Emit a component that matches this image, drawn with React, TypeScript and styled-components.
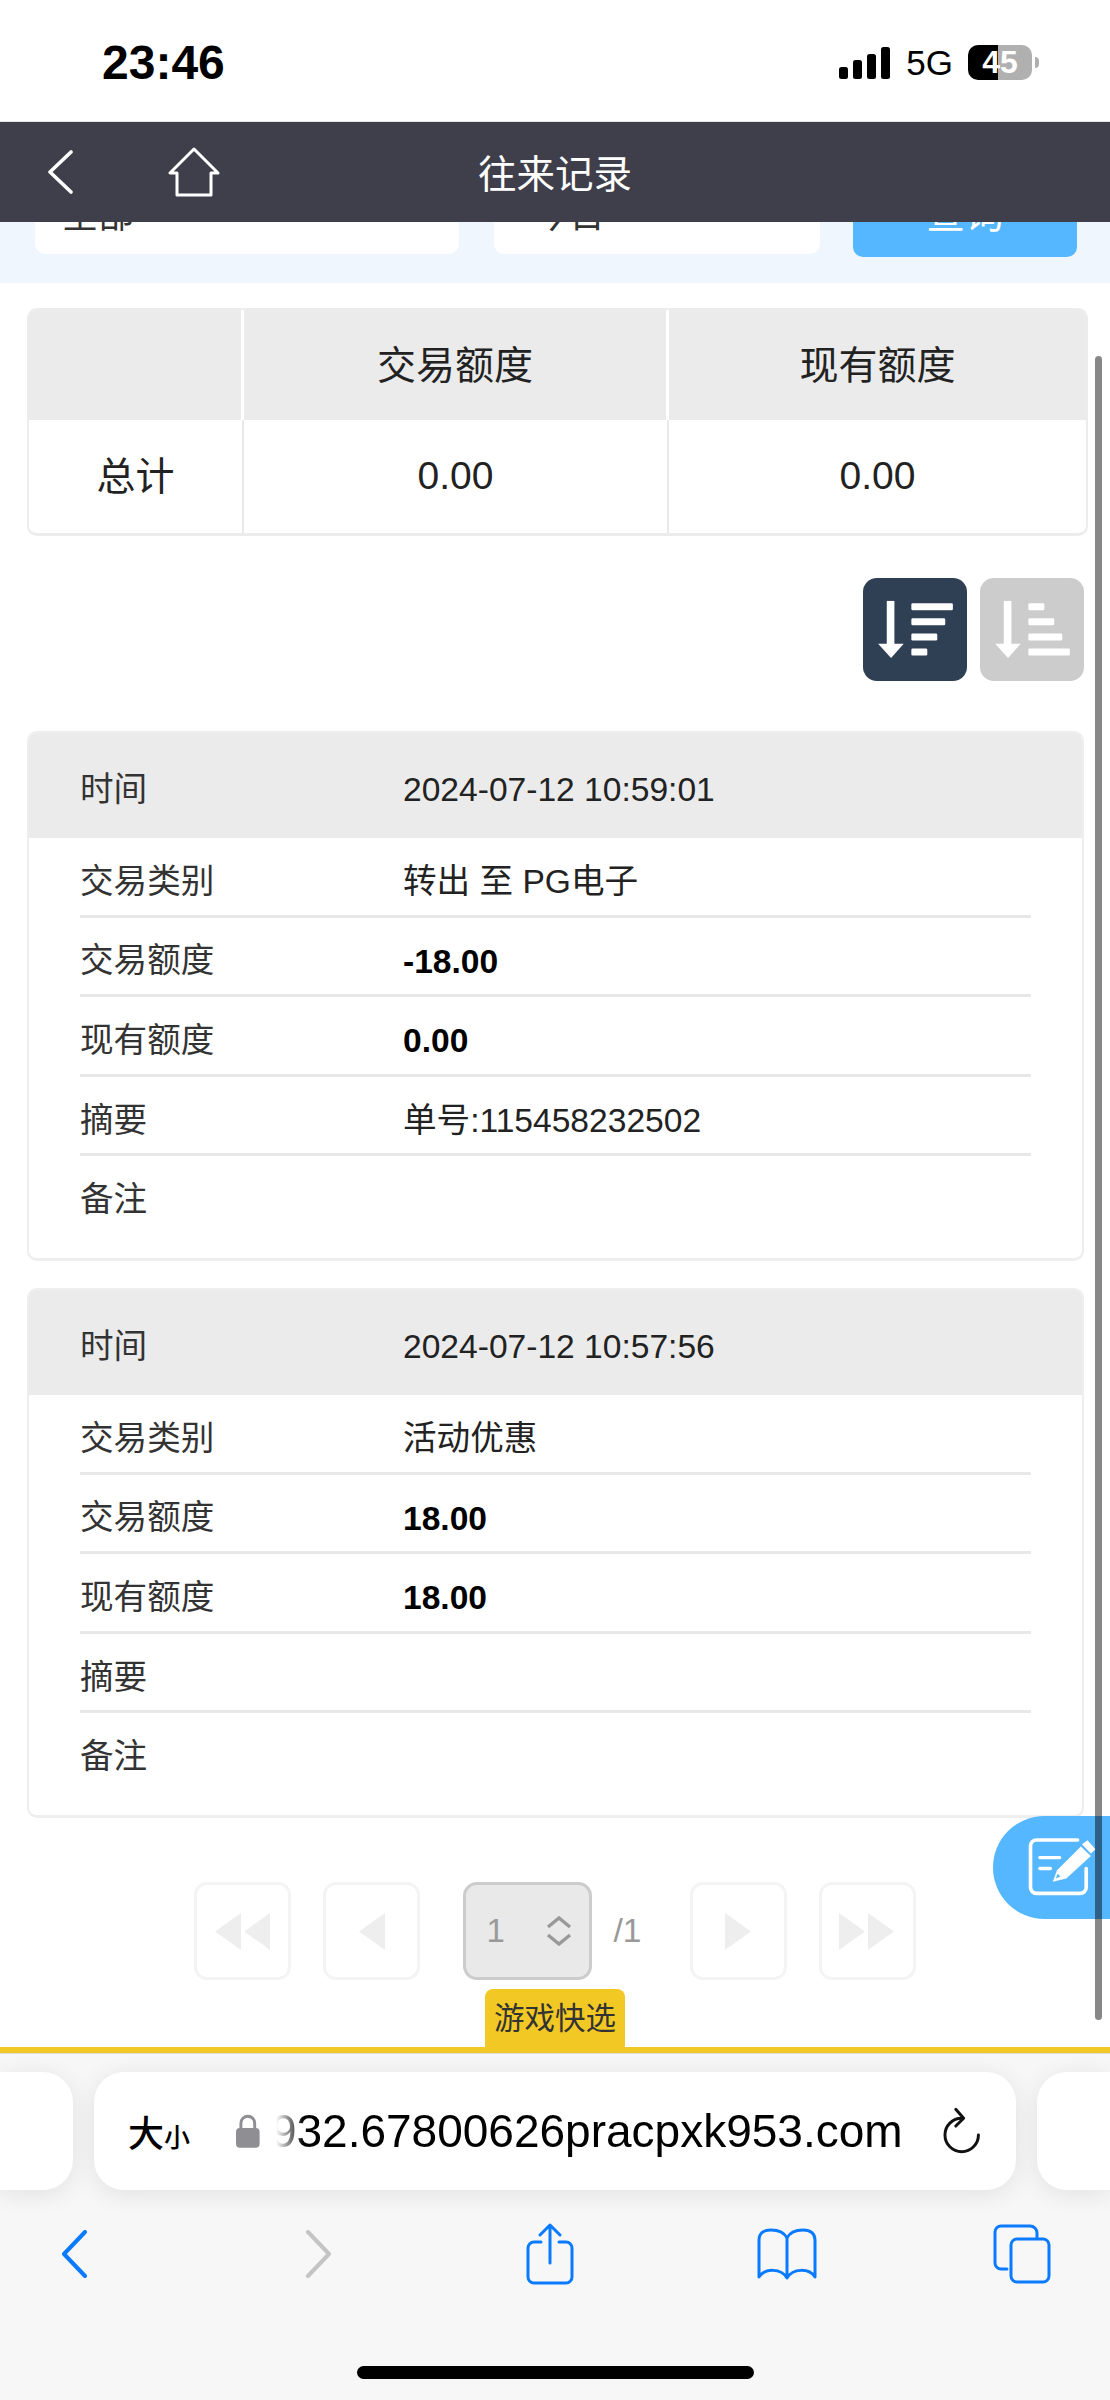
import React from "react";
import styled, { createGlobalStyle } from "styled-components";

const GlobalStyle = createGlobalStyle`
  html, body {
    margin: 0;
    padding: 0;
    background: #fff;
    font-family: "Liberation Sans", "Noto Sans CJK SC", sans-serif;
  }
`;

const Page = styled.div`
  position: relative;
  display: flex;
  flex-direction: column;
  width: 1110px;
  height: 2400px;
  overflow: hidden;
  background: #fff;
  color: #222;
`;

/* ---------- phone status bar ---------- */
const StatusBar = styled.div`
  box-sizing: border-box;
  display: flex;
  justify-content: space-between;
  align-items: center;
  height: 122px;
  padding: 4px 71px 0 102px;
  border-bottom: 1px solid #e6e6e6;
`;

const Clock = styled.span`
  font-size: 48px;
  font-weight: 700;
  color: #000;
`;

const StatusIcons = styled.div`
  display: flex;
  align-items: center;
`;

const Network = styled.span`
  margin: 0 15px 0 16px;
  font-size: 35px;
  color: #000;
`;

const Battery = styled.span`
  display: flex;
  justify-content: center;
  align-items: center;
  width: 64px;
  height: 35px;
  border-radius: 10px;
  background: linear-gradient(to right, #000 0 30px, #b0b0b0 30px);
  color: #fff;
  font-size: 32px;
  font-weight: 700;
`;

const BatteryCap = styled.span`
  width: 4px;
  height: 11px;
  margin-left: 3px;
  border-radius: 0 4px 4px 0;
  background: #b0b0b0;
`;

/* ---------- app header ---------- */
const NavBar = styled.header`
  display: grid;
  grid-template-columns: 1fr auto 1fr;
  align-items: center;
  height: 100px;
  flex: none;
  background: #3f3f4b;
`;

const NavIcons = styled.div`
  display: flex;
  align-items: center;
  gap: 95px;
  padding-left: 47px;
`;

const NavTitle = styled.h1`
  margin: 0 0 3px;
  font-size: 38.5px;
  font-weight: 400;
  color: #fff;
`;

/* ---------- filter bar, scrolled under the header ---------- */
const FilterBar = styled.div`
  box-sizing: border-box;
  display: flex;
  align-items: flex-end;
  height: 61px;
  flex: none;
  overflow: hidden;
  padding: 0 33px 26px 35px;
  background: #f0f6fd;
`;

const FilterSelect = styled.div<{ $width: number; $inset: number }>`
  box-sizing: border-box;
  flex: none;
  width: ${(p) => p.$width}px;
  height: 72px;
  margin: 0 35px 3px 0;
  padding: 0 0 4px ${(p) => p.$inset}px;
  border-radius: 10px;
  background: #fff;
  font-size: 36px;
  line-height: 68px;
  color: #333;
`;

const QueryButton = styled.div`
  box-sizing: border-box;
  flex: none;
  width: 224px;
  height: 75px;
  margin-left: -2px;
  padding-bottom: 9px;
  border-radius: 10px;
  background: #55b7ff;
  color: #fff;
  font-size: 39px;
  line-height: 66px;
  text-align: center;
`;

/* ---------- summary table ---------- */
const Content = styled.main`
  display: flex;
  flex-direction: column;
  padding: 25px 22px 0 27px;
`;

const Summary = styled.div`
  box-sizing: border-box;
  display: grid;
  grid-template-columns: 215px 425px 1fr;
  grid-template-rows: 110px 1fr;
  height: 228px;
  overflow: hidden;
  border: 2px solid #ececec;
  border-bottom-width: 3px;
  border-radius: 10px;
  font-size: 39px;
  text-align: center;
`;

const HeadCell = styled.div`
  display: flex;
  justify-content: center;
  align-items: center;
  padding-bottom: 7px;
  background: #ebebeb;
  border-right: 3px solid #fff;
  color: #222;

  &:nth-child(3) {
    border-right: 0;
  }
`;

const BodyCell = styled.div<{ $label?: boolean }>`
  display: flex;
  justify-content: center;
  align-items: center;
  padding-bottom: ${(p) => (p.$label ? 8 : 2)}px;
  border-right: 2px solid #e9e9e9;
  color: #222;

  &:last-child {
    border-right: 0;
  }
`;

/* ---------- sort buttons ---------- */
const SortRow = styled.div`
  display: flex;
  justify-content: flex-end;
  gap: 13px;
  margin-top: 42px;
  padding-right: 4px;
`;

const SortButton = styled.div<{ $active?: boolean }>`
  width: 104px;
  height: 103px;
  border-radius: 14px;
  background: ${(p) => (p.$active ? "#2f3f54" : "#cccccc")};

  svg {
    display: block;
  }
`;

/* ---------- records ---------- */
const RecordCard = styled.section<{ $top: number }>`
  box-sizing: border-box;
  height: 530px;
  margin: ${(p) => p.$top}px 4px 0 0;
  overflow: hidden;
  border: 2px solid #eeeeee;
  border-bottom-width: 3px;
  border-radius: 10px;
`;

const RecordHead = styled.div`
  display: flex;
  align-items: center;
  height: 105px;
  padding: 9px 0 0 51px;
  box-sizing: border-box;
  background: #ebebeb;
  font-size: 33.6px;
`;

const RecordRow = styled.div`
  box-sizing: border-box;
  display: flex;
  align-items: center;
  height: 79.6px;
  margin: 0 51px;
  padding-top: 12px;
  border-bottom: 3px solid #e8e8e8;
  font-size: 33.6px;

  &:last-child {
    border-bottom-color: transparent;
  }
`;

const RecordLabel = styled.span`
  flex: none;
  width: 323px;
  margin-bottom: 8px;
  color: #333;
`;

const RecordValue = styled.span<{ $bold?: boolean; $cjk?: boolean }>`
  margin-bottom: ${(p) => (p.$cjk ? 8 : 0)}px;
  font-weight: ${(p) => (p.$bold ? 700 : 400)};
  color: ${(p) => (p.$bold ? "#000" : "#222")};
`;

/* ---------- pagination ---------- */
const Pager = styled.nav`
  display: flex;
  justify-content: center;
  align-items: center;
  height: 98px;
  margin: 64px 5px 0 0;
`;

const PagerGroup = styled.div`
  display: flex;
  gap: 32px;
`;

const PageButton = styled.div`
  box-sizing: border-box;
  display: flex;
  justify-content: center;
  align-items: center;
  width: 97px;
  height: 98px;
  border: 3px solid #f4f4f4;
  border-radius: 13px;
`;

const PageSelect = styled.div`
  box-sizing: border-box;
  display: flex;
  justify-content: space-between;
  align-items: center;
  width: 129px;
  height: 98px;
  margin: 0 21px 0 43px;
  padding: 0 17px 0 20px;
  border: 3px solid #cccccc;
  border-radius: 14px;
  background: #e9e9e9;
  font-size: 33px;
  color: #999;
`;

const PageTotal = styled.span`
  margin-right: 48px;
  font-size: 33.6px;
  color: #999;
`;

/* ---------- bottom game tab ---------- */
const QuickTab = styled.div`
  align-self: center;
  flex: none;
  width: 140px;
  height: 58px;
  margin-top: 9px;
  border-radius: 8px 8px 0 0;
  background: #f2c824;
  color: #333;
  font-size: 30.5px;
  line-height: 58px;
  text-align: center;
  white-space: nowrap;
`;

const QuickRule = styled.div`
  flex: none;
  height: 6px;
  background: #f2c824;
`;

/* ---------- safari chrome ---------- */
const Browser = styled.div`
  flex: 1;
  display: flex;
  flex-direction: column;
  background: #f7f7f7;
  border-top: 1px solid #dcdcdc;
`;

const TabStrip = styled.div`
  display: grid;
  grid-template-columns: 73px 922px 1fr;
  gap: 21px;
  height: 118px;
  margin-top: 18px;
`;

const SideTab = styled.div<{ $side: "left" | "right" }>`
  background: #fff;
  box-shadow: 0 4px 26px rgba(0, 0, 0, 0.09);
  border-radius: ${(p) => (p.$side === "left" ? "0 30px 30px 0" : "30px 0 0 30px")};
`;

const AddressPill = styled.div`
  display: flex;
  align-items: center;
  padding: 0 36px 0 34px;
  border-radius: 30px;
  background: #fff;
  box-shadow: 0 4px 26px rgba(0, 0, 0, 0.09);
`;

const ReaderLabel = styled.span`
  flex: none;
  width: 108px;
  font-size: 36px;
  font-weight: 500;
  color: #000;

  small {
    font-size: 26px;
  }
`;

const UrlClip = styled.div`
  display: flex;
  justify-content: flex-end;
  flex: none;
  width: 627px;
  margin: 0 40px 0 16px;
  overflow: hidden;
  white-space: nowrap;
  font-size: 46px;
  color: #000;
  -webkit-mask-image: linear-gradient(to right, transparent 0, #000 28px);
  mask-image: linear-gradient(to right, transparent 0, #000 28px);
`;

const BrowserTools = styled.div`
  display: flex;
  align-items: center;
  height: 68px;
  margin-top: 30px;
  padding-left: 62px;
`;

const ToolSlot = styled.span<{ $gap: number }>`
  display: flex;
  margin-left: ${(p) => p.$gap}px;
`;

const HomeIndicator = styled.div`
  align-self: center;
  width: 397px;
  height: 13px;
  margin-top: 78px;
  border-radius: 7px;
  background: #000;
`;

/* ---------- overlays ---------- */
const FloatButton = styled.div`
  position: absolute;
  top: 1816px;
  right: 0;
  box-sizing: border-box;
  display: flex;
  align-items: center;
  width: 117px;
  height: 103px;
  padding-left: 34px;
  border-radius: 52px 0 0 52px;
  background: #55b7ff;
`;

const ScrollThumb = styled.div`
  position: absolute;
  top: 356px;
  left: 1095px;
  width: 7px;
  height: 1664px;
  border-radius: 4px;
  background: rgba(0, 0, 0, 0.47);
`;

const SortIcon = ({ asc }: { asc?: boolean }) => {
  const widths = asc ? [48, 78, 102, 125] : [125, 102, 78, 48];
  return (
    <svg width="104" height="103" viewBox="0 0 312 310" fill="#fff">
      <rect x="71" y="69" width="23" height="135" />
      <polygon points="45,198 122,198 84,241" />
      {widths.map((w, i) => (
        <rect key={i} x="145" y={76 + i * 45.5} width={w} height="21" rx="4" />
      ))}
    </svg>
  );
};

const Triangle = ({ dir, double }: { dir: "left" | "right"; double?: boolean }) => {
  const one = dir === "left" ? "26,0 26,37 0,18.5" : "0,0 0,37 26,18.5";
  return (
    <svg width={double ? 56 : 26} height="37" viewBox={double ? "0 0 56 37" : "0 0 26 37"} fill="#eeeeee">
      <polygon points={one} />
      {double && <polygon points={one} transform="translate(29 0)" />}
    </svg>
  );
};

const records = [
  {
    time: "2024-07-12 10:59:01",
    kind: "转出 至 PG电子",
    amount: "-18.00",
    balance: "0.00",
    memo: "单号:115458232502",
  },
  {
    time: "2024-07-12 10:57:56",
    kind: "活动优惠",
    amount: "18.00",
    balance: "18.00",
    memo: "",
  },
];

export default function App() {
  return (
    <Page>
      <GlobalStyle />

      <StatusBar>
        <Clock>23:46</Clock>
        <StatusIcons>
          <svg width="51" height="32" viewBox="0 0 51 32" fill="#000">
            <rect x="0" y="20" width="9" height="12" rx="2.5" />
            <rect x="14" y="13" width="9" height="19" rx="2.5" />
            <rect x="28" y="7" width="9" height="25" rx="2.5" />
            <rect x="42" y="0" width="9" height="32" rx="2.5" />
          </svg>
          <Network>5G</Network>
          <Battery>45</Battery>
          <BatteryCap />
        </StatusIcons>
      </StatusBar>

      <NavBar>
        <NavIcons>
          <svg width="26" height="44" viewBox="0 0 26 44" fill="none" stroke="#fff" strokeWidth="3.6" strokeLinecap="round" strokeLinejoin="round">
            <polyline points="24,2 3,22 24,42" />
          </svg>
          <svg width="52" height="50" viewBox="0 0 52 50" fill="none" stroke="#fff" strokeWidth="3" strokeLinejoin="round">
            <path d="M26 2 L2 26 H9 V48 H43 V26 H50 Z" />
          </svg>
        </NavIcons>
        <NavTitle>往来记录</NavTitle>
        <span />
      </NavBar>

      <FilterBar>
        <FilterSelect $width={424} $inset={27}>全部</FilterSelect>
        <FilterSelect $width={326} $inset={39}>今日</FilterSelect>
        <QueryButton>查询</QueryButton>
      </FilterBar>

      <Content>
        <Summary>
          <HeadCell />
          <HeadCell>交易额度</HeadCell>
          <HeadCell>现有额度</HeadCell>
          <BodyCell $label>总计</BodyCell>
          <BodyCell>0.00</BodyCell>
          <BodyCell>0.00</BodyCell>
        </Summary>

        <SortRow>
          <SortButton $active>
            <SortIcon />
          </SortButton>
          <SortButton>
            <SortIcon asc />
          </SortButton>
        </SortRow>

        {records.map((r, i) => (
          <RecordCard key={r.time} $top={i === 0 ? 50 : 27}>
            <RecordHead>
              <RecordLabel>时间</RecordLabel>
              <RecordValue>{r.time}</RecordValue>
            </RecordHead>
            <RecordRow>
              <RecordLabel>交易类别</RecordLabel>
              <RecordValue $cjk>{r.kind}</RecordValue>
            </RecordRow>
            <RecordRow>
              <RecordLabel>交易额度</RecordLabel>
              <RecordValue $bold>{r.amount}</RecordValue>
            </RecordRow>
            <RecordRow>
              <RecordLabel>现有额度</RecordLabel>
              <RecordValue $bold>{r.balance}</RecordValue>
            </RecordRow>
            <RecordRow>
              <RecordLabel>摘要</RecordLabel>
              <RecordValue $cjk>{r.memo}</RecordValue>
            </RecordRow>
            <RecordRow>
              <RecordLabel>备注</RecordLabel>
            </RecordRow>
          </RecordCard>
        ))}

        <Pager>
          <PagerGroup>
            <PageButton>
              <Triangle dir="left" double />
            </PageButton>
            <PageButton>
              <Triangle dir="left" />
            </PageButton>
          </PagerGroup>
          <PageSelect>
            1
            <svg width="26" height="30" viewBox="0 0 26 30" fill="none" stroke="#999" strokeWidth="3.4">
              <polyline points="2,11 13,2 24,11" />
              <polyline points="2,19 13,28 24,19" />
            </svg>
          </PageSelect>
          <PageTotal>/1</PageTotal>
          <PagerGroup>
            <PageButton>
              <Triangle dir="right" />
            </PageButton>
            <PageButton>
              <Triangle dir="right" double />
            </PageButton>
          </PagerGroup>
        </Pager>
      </Content>

      <QuickTab>游戏快选</QuickTab>
      <QuickRule />

      <Browser>
        <TabStrip>
          <SideTab $side="left" />
          <AddressPill>
            <ReaderLabel>
              大<small>小</small>
            </ReaderLabel>
            <svg width="24" height="34" viewBox="0 0 24 34" fill="#8e8e93">
              <path d="M5 15 V9 a7 7 0 0 1 14 0 V15" fill="none" stroke="#8e8e93" strokeWidth="3" />
              <rect x="0" y="14" width="24" height="20" rx="4" />
            </svg>
            <UrlClip>932.67800626pracpxk953.com</UrlClip>
            <svg width="38" height="48" viewBox="0 0 38 48" fill="none" stroke="#111" strokeWidth="3" strokeLinecap="round" strokeLinejoin="round">
              <path d="M19 11 A17 17 0 1 0 36 28" />
              <polyline points="13,2 21,11 13,19" />
            </svg>
          </AddressPill>
          <SideTab $side="right" />
        </TabStrip>

        <BrowserTools>
          <ToolSlot $gap={0}>
            <svg width="25" height="48" viewBox="0 0 25 48" fill="none" stroke="#0a7aff" strokeWidth="4" strokeLinecap="round" strokeLinejoin="round">
              <polyline points="23,2 2,24 23,46" />
            </svg>
          </ToolSlot>
          <ToolSlot $gap={218}>
            <svg width="26" height="48" viewBox="0 0 26 48" fill="none" stroke="#c4c4c4" strokeWidth="4" strokeLinecap="round" strokeLinejoin="round">
              <polyline points="3,2 24,24 3,46" />
            </svg>
          </ToolSlot>
          <ToolSlot $gap={195}>
            <svg width="48" height="62" viewBox="0 0 48 62" fill="none" stroke="#0a7aff" strokeWidth="3" strokeLinecap="round" strokeLinejoin="round">
              <path d="M15 19 H8 a6 6 0 0 0 -6 6 V54 a6 6 0 0 0 6 6 H40 a6 6 0 0 0 6 -6 V25 a6 6 0 0 0 -6 -6 H33" />
              <path d="M24 40 V2 M14 12 L24 2 L34 12" />
            </svg>
          </ToolSlot>
          <ToolSlot $gap={183}>
            <svg width="60" height="52" viewBox="0 0 60 52" fill="none" stroke="#0a7aff" strokeWidth="3" strokeLinejoin="round" strokeLinecap="round">
              <path d="M30 10 C27 4 21 2 14 2 C6 2 2 6 2 12 V49 C8 40 24 40 30 50 C36 40 52 40 58 49 V12 C58 6 54 2 46 2 C39 2 33 4 30 10 V46" />
            </svg>
          </ToolSlot>
          <ToolSlot $gap={176}>
            <svg width="58" height="60" viewBox="0 0 58 60" fill="none" stroke="#0a7aff" strokeWidth="3" strokeLinejoin="round" strokeLinecap="round">
              <rect x="18" y="15" width="38" height="43" rx="6" />
              <path d="M14 45 H8 a6 6 0 0 1 -6 -6 V8 a6 6 0 0 1 6 -6 H37 a7 7 0 0 1 7 7 V14" />
            </svg>
          </ToolSlot>
        </BrowserTools>

        <HomeIndicator />
      </Browser>

      <FloatButton>
        <svg width="70" height="63" viewBox="200 140 210 190">
          <g fill="none" stroke="#fff" strokeLinecap="round">
            <path strokeWidth="11" d="M352 152 H228 a18 18 0 0 0 -18 18 V295 a18 18 0 0 0 18 18 H360 a18 18 0 0 0 18 -18 V238" />
            <path strokeWidth="10" d="M238 205 H298 M238 238 H270" />
          </g>
          <polygon fill="#fff" points="277,278 290,243 362,172 392,200 318,268" />
          <polygon fill="#fff" points="365,165 382,153 406,180 392,193" />
          <polygon fill="#55b7ff" points="286,268 292,254 300,262" />
        </svg>
      </FloatButton>

      <ScrollThumb />
    </Page>
  );
}
